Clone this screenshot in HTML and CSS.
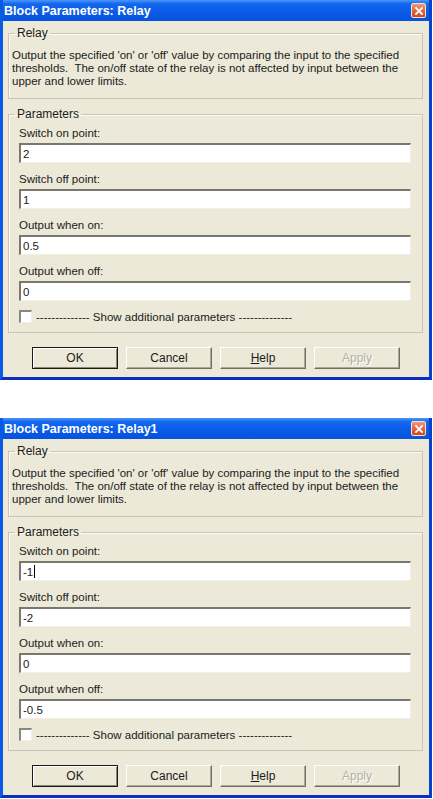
FILE: index.html
```html
<!DOCTYPE html>
<html lang="en">
<head>
    <meta charset="UTF-8">
    <title>Block Parameters: Relay</title>
    <link rel="stylesheet" href="styles.css">
</head>
<body>
    <div class="dialog">
        <div class="titlebar">
            <span class="title">Block Parameters: Relay</span>
            <span class="close">
                <svg width="8" height="8" viewBox="0 0 8 8"><path d="M1 1L7 7M7 1L1 7" stroke="#fff" stroke-width="1.8" stroke-linecap="square"/></svg>
            </span>
        </div>
        <div class="body">
            <fieldset class="group">
                <legend>Relay</legend>
                <div class="desc">Output the specified 'on' or 'off' value by comparing the input to the specified<br>thresholds.&nbsp; The on/off state of the relay is not affected by input between the<br>upper and lower limits.</div>
            </fieldset>
            <fieldset class="group params">
                <legend>Parameters</legend>
                <div class="fields">
                    <div class="field-label">Switch on point:</div>
                    <div class="edit">2</div>
                    <div class="field-label">Switch off point:</div>
                    <div class="edit">1</div>
                    <div class="field-label">Output when on:</div>
                    <div class="edit">0.5</div>
                    <div class="field-label">Output when off:</div>
                    <div class="edit">0</div>
                    <div class="check-row">
                        <span class="checkbox"></span>
                        <span>-------------- Show additional parameters --------------</span>
                    </div>
                </div>
            </fieldset>
            <div class="buttons">
                <span class="btn btn-default">OK</span>
                <span class="btn">Cancel</span>
                <span class="btn"><u>H</u>elp</span>
                <span class="btn btn-disabled">Apply</span>
            </div>
        </div>
    </div>

    <div class="dialog">
        <div class="titlebar">
            <span class="title">Block Parameters: Relay1</span>
            <span class="close">
                <svg width="8" height="8" viewBox="0 0 8 8"><path d="M1 1L7 7M7 1L1 7" stroke="#fff" stroke-width="1.8" stroke-linecap="square"/></svg>
            </span>
        </div>
        <div class="body">
            <fieldset class="group">
                <legend>Relay</legend>
                <div class="desc">Output the specified 'on' or 'off' value by comparing the input to the specified<br>thresholds.&nbsp; The on/off state of the relay is not affected by input between the<br>upper and lower limits.</div>
            </fieldset>
            <fieldset class="group params">
                <legend>Parameters</legend>
                <div class="fields">
                    <div class="field-label">Switch on point:</div>
                    <div class="edit">-1<span class="caret"></span></div>
                    <div class="field-label">Switch off point:</div>
                    <div class="edit">-2</div>
                    <div class="field-label">Output when on:</div>
                    <div class="edit">0</div>
                    <div class="field-label">Output when off:</div>
                    <div class="edit">-0.5</div>
                    <div class="check-row">
                        <span class="checkbox"></span>
                        <span>-------------- Show additional parameters --------------</span>
                    </div>
                </div>
            </fieldset>
            <div class="buttons">
                <span class="btn btn-default">OK</span>
                <span class="btn">Cancel</span>
                <span class="btn"><u>H</u>elp</span>
                <span class="btn btn-disabled">Apply</span>
            </div>
        </div>
    </div>
</body>
</html>
```

FILE: styles.css
```css
body {
    margin: 0;
    background-color: #ffffff;
    font-family: "Liberation Sans", Arial, sans-serif;
    font-size: 11.5px;
    color: #1b1b1b;
}
.dialog {
    width: 432px;
    height: 380px;
    box-sizing: border-box;
    background-color: #ece9d8;
    border-left: 3px solid #0a5ae4;
    border-right: 3px solid #0443cf;
    border-bottom: 3px solid #0a2fc0;
    display: flex;
    flex-direction: column;
}
.dialog + .dialog {
    margin-top: 38px;
}
.titlebar {
    height: 21px;
    flex-shrink: 0;
    display: flex;
    align-items: center;
    justify-content: space-between;
    padding-left: 1px;
    padding-right: 3px;
    background: linear-gradient(to bottom, #4a97fa 0%, #1467ee 18%, #0a5ce9 55%, #0652de 100%);
}
.title {
    color: #ffffff;
    font-weight: bold;
    font-size: 12.5px;
}
.close {
    width: 13px;
    height: 13px;
    border: 1px solid #f6dfd6;
    border-radius: 2px;
    background: linear-gradient(to bottom, #f09a78 0%, #e2673f 50%, #cf481c 100%);
    display: flex;
    align-items: center;
    justify-content: center;
}
.close svg {
    display: block;
}
.body {
    padding: 5px 6px 0 5px;
    display: flex;
    flex-direction: column;
}
.group {
    margin: 0;
    padding: 0;
    border: 1px solid #c9c6b6;
    box-shadow: inset 1px 1px 0 #fbfaf6;
}
.group legend {
    margin-left: 6px;
    padding: 0 2px;
    line-height: 14px;
    font-size: 12px;
}
.desc {
    padding: 9px 3px 10px 3px;
    line-height: 13px;
    white-space: nowrap;
}
.params {
    margin-top: 8px;
}
.fields {
    padding: 5px 11px 9px 10px;
    display: flex;
    flex-direction: column;
}
.field-label {
    line-height: 14px;
    margin-bottom: 3px;
}
.edit {
    height: 20px;
    box-sizing: border-box;
    margin-bottom: 9px;
    background-color: #ffffff;
    border-top: 2px solid #7a786e;
    border-left: 2px solid #7a786e;
    border-bottom: 1px solid #f1efe6;
    border-right: 1px solid #f1efe6;
    padding-left: 2px;
    display: flex;
    align-items: center;
}
.caret {
    width: 1px;
    height: 13px;
    margin-left: 1px;
    background-color: #000000;
}
.check-row {
    height: 13px;
    display: flex;
    align-items: center;
    gap: 4px;
}
.checkbox {
    width: 13px;
    height: 13px;
    box-sizing: border-box;
    background-color: #ffffff;
    border-top: 2px solid #8a887e;
    border-left: 2px solid #8a887e;
    border-bottom: 1px solid #f1efe6;
    border-right: 1px solid #f1efe6;
}
.buttons {
    margin-top: 14px;
    padding-left: 24px;
    display: flex;
    gap: 8px;
}
.btn {
    width: 86px;
    height: 22px;
    box-sizing: border-box;
    display: flex;
    align-items: center;
    justify-content: center;
    font-size: 12px;
    background-color: #ece9d8;
    border-top: 1px solid #ffffff;
    border-left: 1px solid #ffffff;
    border-bottom: 1px solid #6f6d65;
    border-right: 1px solid #6f6d65;
    box-shadow: inset -1px -1px 0 #aca899;
}
.btn-default {
    border: 1px solid #1a1a1a;
    box-shadow: inset 1px 1px 0 #ffffff, inset -1px -1px 0 #8a887e;
}
.btn-disabled {
    color: #b3b0a2;
    text-shadow: 1px 1px 0 #ffffff;
}
```
